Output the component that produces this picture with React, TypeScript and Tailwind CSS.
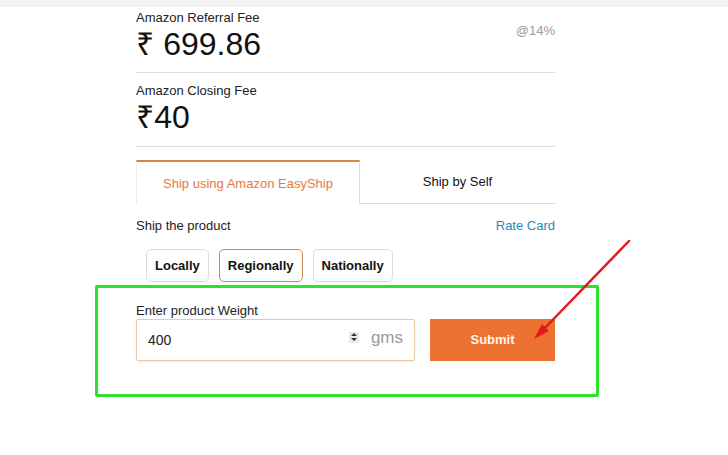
const sans = "font-['Liberation_Sans','Noto_Sans','DejaVu_Sans',sans-serif]";

function FeeBlock({
  label,
  amount,
  note,
  bottomPad,
}: {
  label: string;
  amount: string;
  note?: string;
  bottomPad: string;
}) {
  return (
    <div className={`flex justify-between border-b border-[#dedede] ${bottomPad}`}>
      <div>
        <p className="text-[13px] leading-[15px] text-[#222]">{label}</p>
        <p className="mt-px text-[32px] leading-[36px] text-[#111]">{amount}</p>
      </div>
      {note ? (
        <p className="pt-[13px] text-[13px] leading-[15px] text-[#9a9a9a]">{note}</p>
      ) : null}
    </div>
  );
}

function RegionButton({ label, active }: { label: string; active?: boolean }) {
  return (
    <button
      className={`h-[33px] rounded-[5px] border px-2 text-[13px] font-bold text-[#111] ${
        active ? "border-[#c98a57]" : "border-[#dcdcdc]"
      }`}
    >
      {label}
    </button>
  );
}

export default function App() {
  return (
    <div className={`relative h-[455px] w-[728px] overflow-hidden bg-white ${sans}`}>
      <div className="h-[7px] bg-[#f3f3f3]" />

      <div className="ml-[136px] w-[419px]">
        <div className="pt-[3px]">
          <FeeBlock label="Amazon Referral Fee" amount="₹ 699.86" note="@14%" bottomPad="pb-[10px]" />
        </div>
        <div className="pt-[10px]">
          <FeeBlock label="Amazon Closing Fee" amount="₹40" bottomPad="pb-[11px]" />
        </div>

        {/* tabs */}
        <div className="mt-[13px] flex h-[44px]">
          <div className="flex w-[224px] items-center justify-center border-x border-t-2 border-l-[#ececec] border-r-[#dcdcdc] border-t-[#d9843f] text-[13px] leading-[15px] text-[#e8793a]">
            Ship using Amazon EasyShip
          </div>
          <div className="flex flex-1 items-center justify-center border-b border-[#dcdcdc] pb-px text-[13px] leading-[15px] text-[#111]">
            Ship by Self
          </div>
        </div>

        <div className="mt-[14px] flex justify-between text-[13px] leading-[15px]">
          <span className="text-[#222]">Ship the product</span>
          <span className="text-[#2b8ab9]">Rate Card</span>
        </div>

        <div className="ml-[10px] mt-[16px] flex gap-[10px]">
          <RegionButton label="Locally" />
          <RegionButton label="Regionally" active />
          <RegionButton label="Nationally" />
        </div>
      </div>

      {/* highlighted weight form */}
      <div className="ml-[95px] mt-[3px] h-[112px] w-[504px] rounded-[2px] border-[3px] border-[#2de22d] pl-[38px] pt-[15px]">
        <p className="text-[13px] leading-[15px] text-[#222]">Enter product Weight</p>
        <div className="mt-px flex gap-[15px]">
          <div className="flex h-[42px] w-[279px] items-center rounded-[2px] border border-[#ebc9a4] pl-[11px] pr-[11px] shadow-[0_1px_2px_rgba(0,0,0,0.08)]">
            <input
              defaultValue="400"
              className="min-w-0 flex-1 bg-transparent text-[14px] text-[#222] outline-none"
            />
            <span className="-mt-[6px] mr-[12px] flex h-[11px] w-[10px] flex-col items-center justify-center gap-[2px] rounded-[1px] bg-[#e8e8e8]">
              <span className="h-0 w-0 border-x-[3px] border-b-[3px] border-x-transparent border-b-[#333]" />
              <span className="h-0 w-0 border-x-[3px] border-t-[3px] border-x-transparent border-t-[#333]" />
            </span>
            <span className="-mt-[5px] text-[17px] leading-[20px] text-[#9a9a9a]">gms</span>
          </div>
          <button className="h-[42px] w-[125px] bg-[#ec7232] text-[13px] font-bold text-[#fff6ee]">
            Submit
          </button>
        </div>
      </div>

      {/* annotation arrow */}
      <svg className="pointer-events-none absolute left-0 top-0" width="728" height="455" viewBox="0 0 728 455">
        <line x1="629" y1="241" x2="541" y2="332" stroke="#e01b1b" strokeWidth="2.5" strokeLinecap="round" />
        <polygon points="534,339 549,331 542,324" fill="#e01b1b" />
      </svg>
    </div>
  );
}
